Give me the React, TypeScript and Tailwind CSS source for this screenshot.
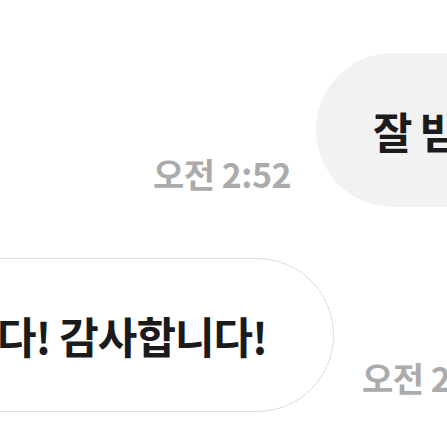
export default function App() {
  const font = { fontFamily: '"Noto Sans CJK KR", "Noto Sans", sans-serif' };

  return (
    <div className="w-[447px] h-[447px] overflow-hidden bg-white" style={font}>
      {/* outgoing message */}
      <div className="flex items-end gap-[25px] pl-[153px] pt-[53px] whitespace-nowrap">
        <span className="shrink-0 mb-[16px] text-[34px] font-semibold leading-none tracking-[-0.5px] text-[#ababab]">
          오전 2:52
        </span>
        <div className="shrink-0 h-[154px] rounded-full bg-[#f2f2f2] pl-[57px] pr-[60px] flex items-center">
          <span className="text-[43px] font-bold tracking-[-1px] text-[#1b1b1b]">잘 받았습니다!</span>
        </div>
      </div>

      {/* incoming message */}
      <div className="flex items-end justify-end gap-[28px] w-[500px] mt-[51px] whitespace-nowrap">
        <div className="shrink-0 h-[154px] rounded-full border-[1.5px] border-[#dcdcdc] bg-white pl-[60px] pr-[66px] flex items-center">
          <span className="text-[43px] font-bold tracking-[-1px] text-[#1b1b1b]">네, 잘 받았습니다! 감사합니다!</span>
        </div>
        <span className="shrink-0 mb-[17px] text-[34px] font-semibold leading-none tracking-[-0.5px] text-[#ababab]">
          오전 2:52
        </span>
      </div>
    </div>
  );
}
